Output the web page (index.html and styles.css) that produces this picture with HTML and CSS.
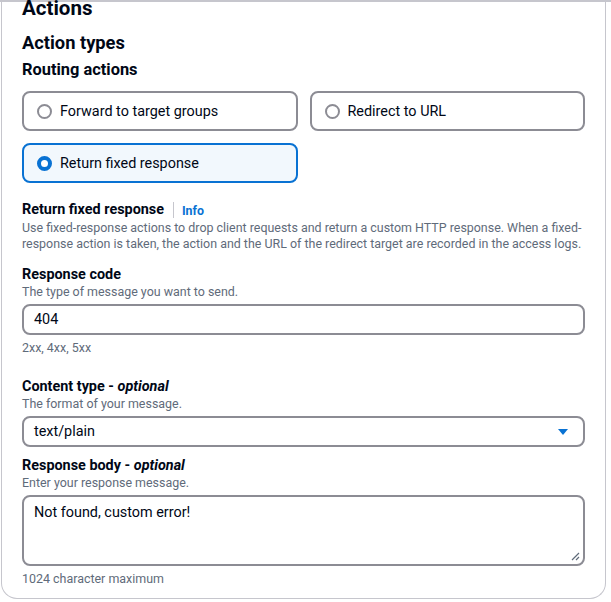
FILE: index.html
```html
<!DOCTYPE html>
<html>
<head>
<meta charset="utf-8">
<link rel="stylesheet" href="styles.css">
</head>
<body>
<div class="topline"></div>
<div class="card">
  <h2 class="h-actions">Actions</h2>
  <h3 class="h-types">Action types</h3>
  <h4 class="h-routing">Routing actions</h4>
  <div class="tiles">
    <div class="tile"><span class="radio"></span><span>Forward to target groups</span></div>
    <div class="tile"><span class="radio"></span><span>Redirect to URL</span></div>
    <div class="tile selected"><span class="radio checked"></span><span>Return fixed response</span></div>
  </div>

  <div class="section">
    <div class="label-row"><span class="label">Return fixed response</span><span class="sep"></span><span class="info">Info</span></div>
    <p class="desc">Use fixed-response actions to drop client requests and return a custom HTTP response. When a fixed-response action is taken, the action and the URL of the redirect target are recorded in the access logs.</p>
  </div>

  <div class="field f-code">
    <div class="label">Response code</div>
    <div class="desc">The type of message you want to send.</div>
    <div class="input">404</div>
    <div class="hint">2xx, 4xx, 5xx</div>
  </div>

  <div class="field f-type">
    <div class="label">Content type - <i>optional</i></div>
    <div class="desc">The format of your message.</div>
    <div class="input select"><span>text/plain</span>
      <svg class="caret" width="12" height="8" viewBox="0 0 12 8"><path d="M1 1h10L6 7z" fill="#0972d3"/></svg>
    </div>
  </div>

  <div class="field f-body">
    <div class="label">Response body - <i>optional</i></div>
    <div class="desc">Enter your response message.</div>
    <div class="input textarea">Not found, custom error!
      <svg class="grip" width="10" height="10" viewBox="0 0 10 10"><path d="M9 2L2 9M9 6L6 9" stroke="#5f6b7a" stroke-width="1.2" fill="none"/></svg>
    </div>
    <div class="hint">1024 character maximum</div>
  </div>
</div>
</body>
</html>
```

FILE: styles.css
```css
* { box-sizing: border-box; }
html, body { margin: 0; padding: 0; background: #fff; }
body {
  font-family: Roboto, "Open Sans", Arial, sans-serif;
  color: #000716;
  width: 611px;
  height: 602px;
  overflow: hidden;
}
.topline {
  height: 2px;
  border-top: 2px solid #c6c6cd;
}
.card {
  margin-top: -2px;
  margin-left: 1px;
  width: 605px;
  height: 601px;
  border: 1px solid #c6c6cd;
  border-top: none;
  border-radius: 0 0 16px 16px;
  padding: 0 20px 0 20px;
}
h2, h3, h4, p { margin: 0; }
.h-actions {
  font-size: 20.5px;
  font-weight: 700;
  line-height: 20px;
  margin-top: -4px;
}
.h-types {
  font-size: 18.3px;
  font-weight: 700;
  line-height: 22px;
  margin-top: 14px;
}
.h-routing {
  font-size: 16.4px;
  font-weight: 700;
  line-height: 20px;
  margin-top: 6px;
}
.tiles {
  margin-top: 11px;
  display: grid;
  grid-template-columns: 1fr 1fr;
  column-gap: 12px;
  row-gap: 12px;
}
.tile {
  height: 40px;
  border: 2px solid #8c8c94;
  border-radius: 8px;
  display: flex;
  align-items: center;
  padding-left: 13px;
  font-size: 14.4px;
  gap: 8px;
}
.tile.selected {
  border-color: #0972d3;
  background: #f2f8fd;
}
.radio {
  width: 15px;
  height: 15px;
  border: 2px solid #8c8c94;
  border-radius: 50%;
  background: #fff;
  flex: none;
}
.radio.checked {
  border: 4px solid #0972d3;
}
.section { margin-top: 18px; }
.label-row { display: flex; align-items: center; height: 18px; }
.label { font-size: 14.4px; font-weight: 700; line-height: 18px; height: 18px; }
.label i { font-weight: 700; line-height: 18px; }
.sep {
  width: 1px; height: 16px; background: #c6c6cd; margin: 0 8px 0 9px;
}
.info { color: #0972d3; font-weight: 700; font-size: 12.4px; }
.desc {
  font-size: 12.45px;
  line-height: 16px;
  height: 16px;
  color: #5f6b7a;
}
p.desc { height: auto; margin-top: 1px; }
.f-code { margin-top: 14px; }
.f-type { margin-top: 22px; }
.f-body { margin-top: 10px; }
.input {
  margin-top: 4px;
  height: 31px;
  border: 2px solid #8c8c94;
  border-radius: 8px;
  font-size: 14.4px;
  padding: 0 0 0 10px;
  display: flex;
  align-items: center;
}
.select { justify-content: space-between; padding-right: 14px; }
.textarea {
  height: 71px;
  align-items: flex-start;
  padding-top: 7px;
  position: relative;
}
.grip { position: absolute; right: 3px; bottom: 3px; }
.hint {
  margin-top: 5px;
  font-size: 12.45px;
  line-height: 16px;
  color: #5f6b7a;
}
```
